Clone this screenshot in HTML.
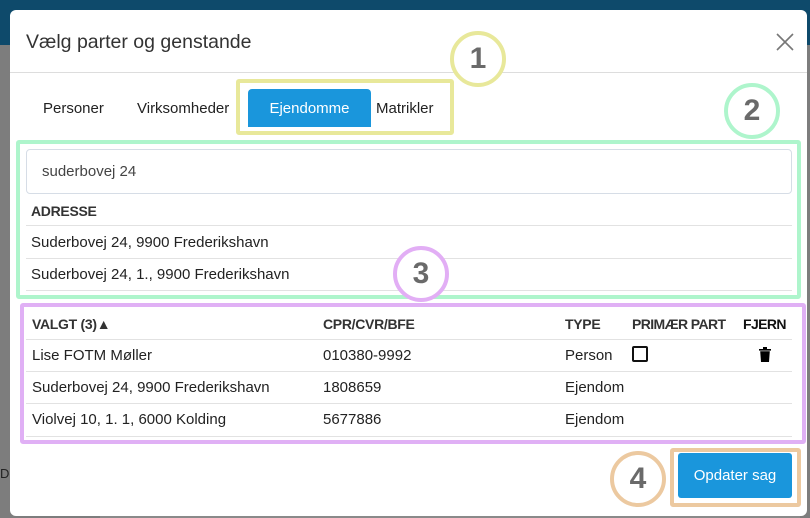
<!DOCTYPE html>
<html><head><meta charset="utf-8"><style>
*{box-sizing:border-box;margin:0;padding:0}
body{width:810px;height:518px;overflow:hidden;background:#7d7d7d;font-family:"Liberation Sans",sans-serif;color:#222;position:relative;font-size:15px}
.abs{position:absolute}
.top{left:0;top:0;width:810px;height:45px;background:#0e4a6b}
.modal{left:10px;top:10px;width:797px;height:506px;background:#fff;border-radius:6px}
.circ{position:absolute;width:56px;height:56px;border-radius:50%;border:4px solid;background:#fff;text-align:center;line-height:48px;font-size:30px;font-weight:bold;color:#6a6a6a}
.t{position:absolute;white-space:nowrap}
.line{position:absolute;height:1px;background:#e2e2e2}
.b{font-weight:bold;color:#333;font-size:14px;letter-spacing:-0.3px}
</style></head><body>
<div class="abs top"></div>
<div class="t" style="left:0;top:466px;font-size:13px;color:#222">Do</div>
<div class="abs" style="left:100px;top:510px;width:700px;height:8px;background:#8a8a8a"></div>
<div class="abs modal"></div>
<div class="t" style="left:26px;top:31px;font-size:19.5px;color:#333">Vælg parter og genstande</div>
<svg class="abs" style="left:776px;top:33px" width="18" height="18"><path d="M1 1L17 17M17 1L1 17" stroke="#777" stroke-width="1.6"/></svg>
<div class="line" style="left:10px;top:72px;width:797px;background:#ddd"></div>

<div class="abs" style="left:236px;top:79px;width:218px;height:56px;border:4px solid #e8e89a;border-radius:3px"></div>
<div class="abs" style="left:248px;top:89px;width:123px;height:38px;background:#1a96dc;border-radius:4px 4px 0 0"></div>
<div class="t" style="left:43px;top:100px">Personer</div>
<div class="t" style="left:137px;top:100px">Virksomheder</div>
<div class="t" style="left:248px;top:100px;width:123px;text-align:center;color:#fff">Ejendomme</div>
<div class="t" style="left:376px;top:100px">Matrikler</div>
<div class="circ" style="left:450px;top:31px;border-color:#e8e89a">1</div>
<div class="circ" style="left:724px;top:83px;border-color:#aef5cc">2</div>

<div class="abs" style="left:16px;top:140px;width:785px;height:159px;border:4px solid #aef5cc;border-radius:3px"></div>
<div class="abs" style="left:26px;top:149px;width:766px;height:45px;border:1px solid #d6dde6;border-radius:4px"></div>
<div class="t" style="left:42px;top:163px;color:#444">suderbovej 24</div>
<div class="t b" style="left:31px;top:203px">ADRESSE</div>
<div class="line" style="left:26px;top:225px;width:766px"></div>
<div class="t" style="left:31px;top:234px">Suderbovej 24, 9900 Frederikshavn</div>
<div class="line" style="left:26px;top:258px;width:766px"></div>
<div class="t" style="left:31px;top:266px">Suderbovej 24, 1., 9900 Frederikshavn</div>
<div class="line" style="left:26px;top:290px;width:766px"></div>

<div class="abs" style="left:20px;top:303px;width:786px;height:141px;border:4px solid #e0b0f5;border-radius:3px"></div>
<div class="t b" style="left:32px;top:316px">VALGT (3)▲</div>
<div class="t b" style="left:323px;top:316px">CPR/CVR/BFE</div>
<div class="t b" style="left:565px;top:316px">TYPE</div>
<div class="t b" style="left:632px;top:316px;letter-spacing:-0.6px">PRIMÆR PART</div>
<div class="t b" style="left:743px;top:316px;color:#111;letter-spacing:-0.6px">FJERN</div>
<div class="line" style="left:26px;top:339px;width:766px"></div>
<div class="t" style="left:32px;top:347px">Lise FOTM Møller</div>
<div class="t" style="left:323px;top:347px">010380-9992</div>
<div class="t" style="left:565px;top:347px">Person</div>
<div class="abs" style="left:632px;top:346px;width:16px;height:16px;border:2px solid #111;border-radius:2px"></div>
<svg class="abs" style="left:759px;top:347px" width="12" height="15"><path d="M0 2h12v1.6H0zM4 0h4v2H4zM1.2 4.2h9.6L10 15H2z" fill="#000"/></svg>
<div class="line" style="left:26px;top:371px;width:766px"></div>
<div class="t" style="left:32px;top:379px">Suderbovej 24, 9900 Frederikshavn</div>
<div class="t" style="left:323px;top:379px">1808659</div>
<div class="t" style="left:565px;top:379px">Ejendom</div>
<div class="line" style="left:26px;top:403px;width:766px"></div>
<div class="t" style="left:32px;top:411px">Violvej 10, 1. 1, 6000 Kolding</div>
<div class="t" style="left:323px;top:411px">5677886</div>
<div class="t" style="left:565px;top:411px">Ejendom</div>
<div class="line" style="left:26px;top:436px;width:766px"></div>
<div class="circ" style="left:393px;top:246px;border-color:#e2aef5">3</div>

<div class="circ" style="left:610px;top:451px;border-color:#ecc9a0">4</div>
<div class="abs" style="left:670px;top:448px;width:131px;height:59px;border:4px solid #ecc9a0;border-radius:3px"></div>
<div class="abs" style="left:678px;top:453px;width:114px;height:45px;background:#1a96dc;border-radius:3px"></div>
<div class="t" style="left:678px;top:467px;width:114px;text-align:center;color:#fff;font-size:15px">Opdater sag</div>
</body></html>
